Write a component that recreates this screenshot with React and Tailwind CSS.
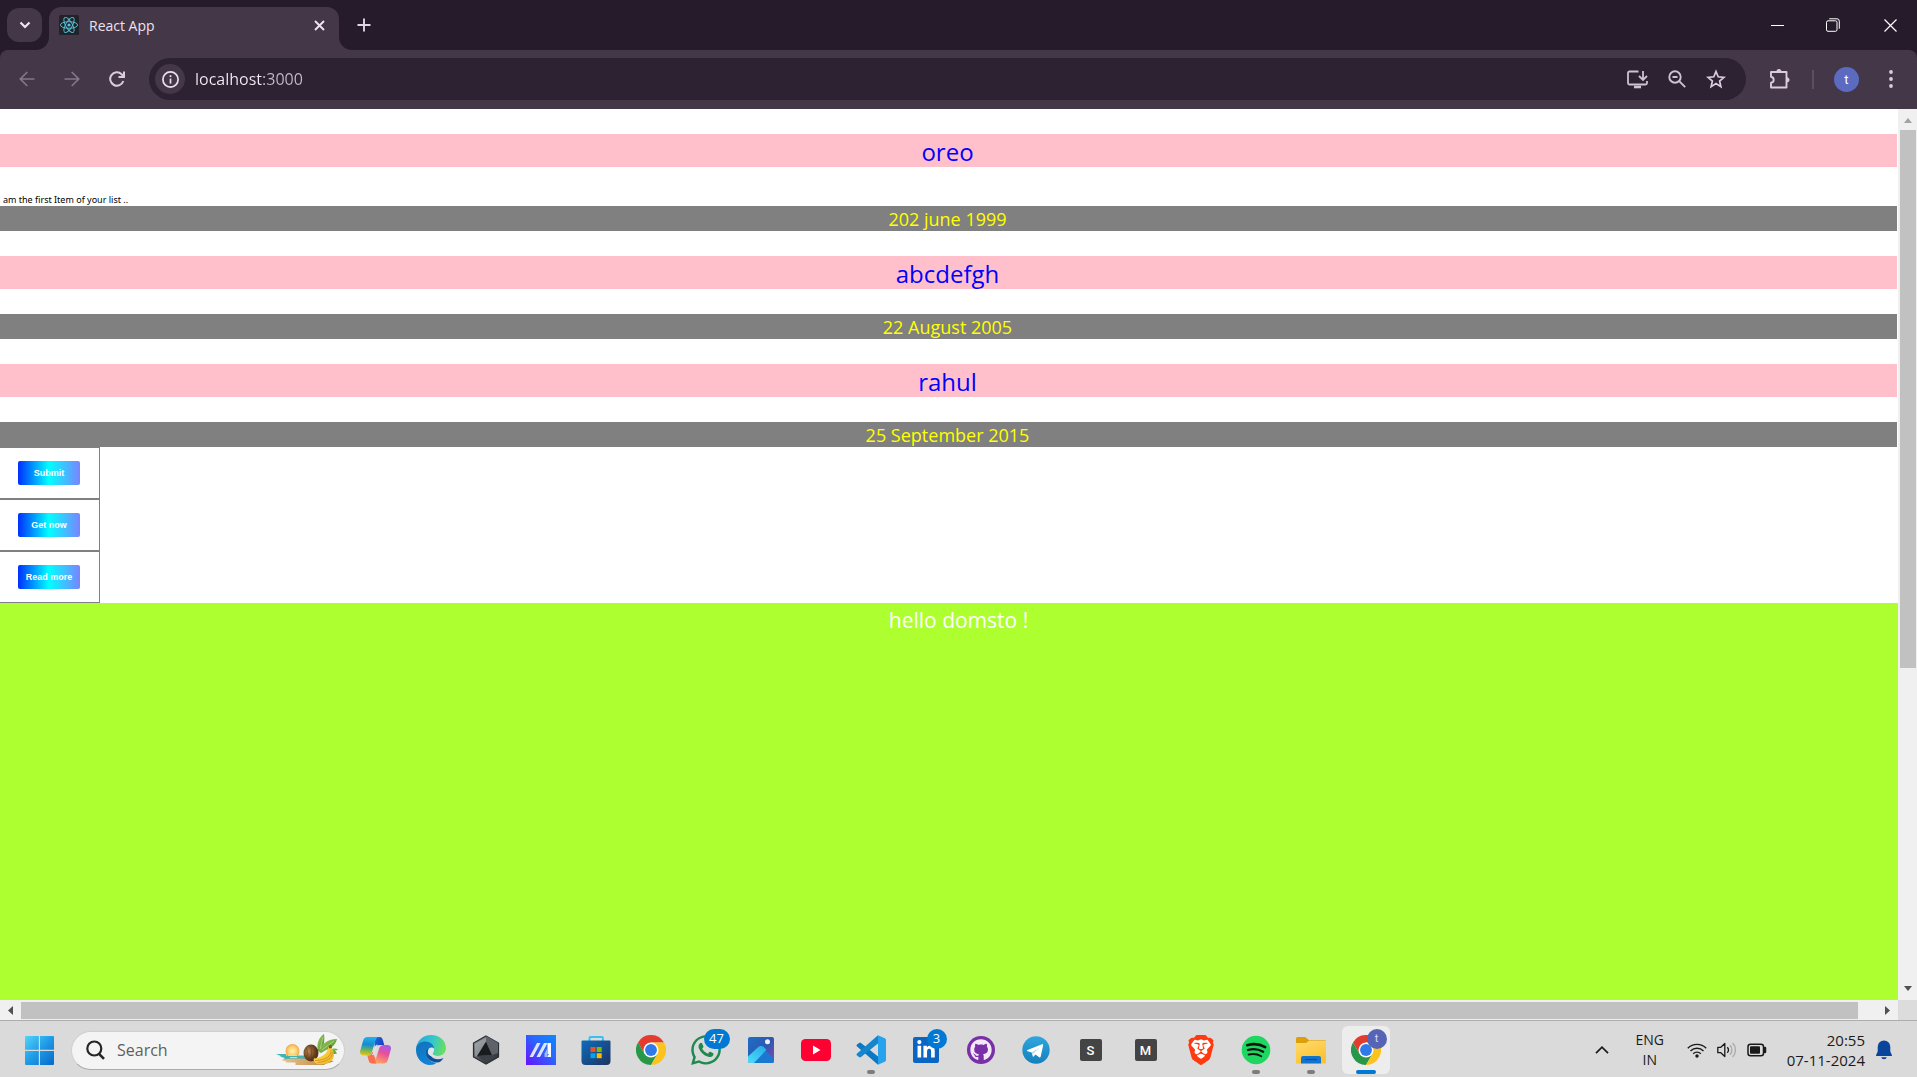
import React from "react";
import { FaWhatsapp, FaGithub, FaLinkedinIn } from "react-icons/fa";
import { SiBrave } from "react-icons/si";

const ENTRIES = [
  { name: "oreo", date: "202 june 1999", note: "am the first Item of your list .." },
  { name: "abcdefgh", date: "22 August 2005" },
  { name: "rahul", date: "25 September 2015" },
];

const ACTIONS = ["Submit", "Get now", "Read more"];

/* ---------- browser chrome ---------- */

function ReactLogo() {
  return (
    <svg width="20" height="20" viewBox="0 0 20 20" aria-hidden="true">
      <rect width="20" height="20" rx="1.5" fill="#20232a" />
      <g fill="none" stroke="#58c4dc" strokeWidth="0.9">
        <ellipse cx="10" cy="10" rx="8.6" ry="3.3" />
        <ellipse cx="10" cy="10" rx="8.6" ry="3.3" transform="rotate(60 10 10)" />
        <ellipse cx="10" cy="10" rx="8.6" ry="3.3" transform="rotate(120 10 10)" />
      </g>
      <circle cx="10" cy="10" r="1.6" fill="#58c4dc" />
    </svg>
  );
}

function TabCurve({ flip }) {
  return (
    <svg width="13" height="13" viewBox="0 0 13 13" className={flip ? "-scale-x-100" : ""} aria-hidden="true">
      <path d="M13 0v13H0C7.200 13 13 7.200 13 0z" fill="#443748" />
    </svg>
  );
}

function TitleBar() {
  return (
    <div className="flex h-[50px] items-end justify-between bg-[#261b2b]">
      <div className="flex h-full items-end">
        <button aria-label="Search tabs" className="mb-2 ml-[7px] flex h-[34px] w-[35px] items-center justify-center rounded-xl bg-[#443748]">
          <svg width="12" height="8" viewBox="0 0 12 8" fill="none" stroke="#efe4f2" strokeWidth="2.2" aria-hidden="true">
            <path d="M1.500 1.500L6 6l4.500-4.500" />
          </svg>
        </button>
        <div className="-ml-[6px]"><TabCurve /></div>
        <div className="flex h-[43px] w-[290px] items-center rounded-t-xl bg-[#443748] pb-[7px] pl-[10px] pr-[10px]">
          <ReactLogo />
          <span className="ml-[10px] flex-1 pt-0.5 text-sm text-[#ece2ee]">React App</span>
          <button aria-label="Close tab" className="flex h-5 w-5 items-center justify-center">
            <svg width="11" height="11" viewBox="0 0 11 11" stroke="#efe4f2" strokeWidth="1.900" aria-hidden="true">
              <path d="M1 1l9 9M10 1l-9 9" />
            </svg>
          </button>
        </div>
        <TabCurve flip />
        <button aria-label="New tab" className="mb-[15px] flex h-5 w-6 items-center justify-center">
          <svg width="14" height="14" viewBox="0 0 14 14" stroke="#e2d3e8" strokeWidth="1.900" aria-hidden="true">
            <path d="M7 0.500v13M0.500 7h13" />
          </svg>
        </button>
      </div>
      <div className="flex h-full">
        <button aria-label="Minimize" className="flex w-14 items-center justify-center">
          <svg width="13" height="13" viewBox="0 0 13 13" aria-hidden="true"><path d="M0 6.500h13" stroke="#fff" /></svg>
        </button>
        <button aria-label="Restore" className="flex w-14 items-center justify-center">
          <svg width="14" height="14" viewBox="0 0 14 14" fill="none" stroke="#fff" aria-hidden="true">
            <rect x="0.500" y="2.800" width="10.500" height="10.500" rx="1.500" />
            <path d="M3.200 0.800h7.800a2.300 2.300 0 0 1 2.300 2.300v7.600" />
          </svg>
        </button>
        <button aria-label="Close window" className="flex w-14 items-center justify-center pl-[2px]">
          <svg width="13" height="13" viewBox="0 0 13 13" stroke="#fff" strokeWidth="1.200" aria-hidden="true">
            <path d="M0.500 0.500l12 12M12.500 0.500l-12 12" />
          </svg>
        </button>
      </div>
    </div>
  );
}

function Toolbar() {
  const stroke = "#dccbe1";
  return (
    <div className="bg-[#261b2b]">
      <div className="flex h-[59px] items-center rounded-t-lg bg-[#443748] pb-px pr-4">
        <button aria-label="Back" className="ml-[14px] flex h-8 w-[25px] items-center justify-center">
          <svg width="16" height="16" viewBox="0 0 16 16" fill="none" stroke="#85768a" strokeWidth="1.700" aria-hidden="true">
            <path d="M15.500 8H1.500M8.300 1L1.300 8l7 7" />
          </svg>
        </button>
        <button aria-label="Forward" className="ml-5 flex h-8 w-[25px] items-center justify-center">
          <svg width="16" height="16" viewBox="0 0 16 16" fill="none" stroke="#85768a" strokeWidth="1.700" aria-hidden="true">
            <path d="M0.500 8h14M7.700 1l7 7-7 7" />
          </svg>
        </button>
        <button aria-label="Reload" className="ml-5 flex h-8 w-[25px] items-center justify-center">
          <svg width="16" height="16" viewBox="0 0 16 16" fill="none" stroke={stroke} strokeWidth="2" aria-hidden="true">
            <path d="M14.300 10A6.700 6.700 0 1 1 12.600 3.200L14 4.700" />
            <path d="M15 0.500v5.400H9.500" />
          </svg>
        </button>
        <div className="ml-5 flex h-[42px] flex-1 items-center rounded-full bg-[#2c2232] pl-[6px] pr-5">
          <button aria-label="View site information" className="flex h-[30px] w-[30px] items-center justify-center rounded-full bg-[#443748]">
            <svg width="17" height="17" viewBox="0 0 17 17" fill="none" stroke="#eadff0" strokeWidth="1.700" aria-hidden="true">
              <circle cx="8.500" cy="8.500" r="7.600" />
              <path d="M8.500 7.600v5" />
              <path d="M8.500 4.200v1.900" />
            </svg>
          </button>
          <input
            type="text"
            aria-label="Address"
            defaultValue="localhost:3000"
            className="ml-[10px] min-w-0 flex-1 bg-[linear-gradient(to_right,#f3ecf5_68px,#c5b9ca_68px)] bg-clip-text text-base text-transparent outline-none"
          />
          <div className="flex items-center gap-5">
            <button aria-label="Install app">
              <svg width="21" height="19" viewBox="0 0 21 19" fill="none" stroke="#cfc0d4" strokeWidth="1.800" aria-hidden="true">
                <path d="M11.500 1.500H2.500a1.500 1.500 0 0 0-1.500 1.500v10a1.500 1.500 0 0 0 1.500 1.500h16a1.500 1.500 0 0 0 1.500-1.500v-2" />
                <path d="M16 1v8.500M12 6l4 4 4-4" />
                <path d="M7 17h7" strokeWidth="2.600" />
              </svg>
            </button>
            <button aria-label="Zoom">
              <svg width="18" height="18" viewBox="0 0 18 18" fill="none" stroke="#cfc0d4" strokeWidth="1.900" aria-hidden="true">
                <circle cx="7" cy="7" r="5.700" />
                <path d="M11.200 11.200l6 6M4.500 7h5" />
              </svg>
            </button>
            <button aria-label="Bookmark this tab">
              <svg width="20" height="20" viewBox="0 0 20 20" fill="none" stroke="#dccbe1" strokeWidth="1.700" aria-hidden="true">
                <path d="M10 2.500l2.200 5.300 5.700.5-4.300 3.700 1.300 5.600-4.900-3-4.900 3 1.300-5.600-4.300-3.700 5.700-.5z" />
              </svg>
            </button>
          </div>
        </div>
        <button aria-label="Extensions" className="ml-[23px]">
          <svg width="22" height="22" viewBox="0 0 22 22" fill="none" stroke={stroke} strokeWidth="1.900" strokeLinejoin="round" aria-hidden="true">
            <path d="M2 4h15.500v15.500H2v-4.700c3.600-.6 3.600-5.400 0-6z" />
            <path d="M7.800 3.500a2.100 2.100 0 0 1 4.200 0zM18 9.800a2.100 2.100 0 0 1 0 4.200z" fill={stroke} strokeWidth="1" />
          </svg>
        </button>
        <div className="ml-[21px] h-[19px] w-[2px] bg-[#5c4f61]" />
        <button aria-label="Profile t" className="ml-5 h-[25px] w-[25px] rounded-full bg-[#5c6bc0] font-['Roboto',sans-serif] text-[13px] leading-[25px] text-white">
          t
        </button>
        <button aria-label="Menu" className="ml-[22px] flex w-5 justify-center">
          <svg width="4" height="18" viewBox="0 0 4 18" fill="#dccbe1" aria-hidden="true">
            <circle cx="2" cy="2" r="1.900" /><circle cx="2" cy="9" r="1.900" /><circle cx="2" cy="16" r="1.900" />
          </svg>
        </button>
      </div>
    </div>
  );
}

/* ---------- page ---------- */

function Entry({ name, date, note }) {
  return (
    <section>
      <h2 className="my-[25px] bg-[#ffc0cb] pr-0.5 pt-0.5 text-center text-2xl/[31px] font-normal text-[#0000ff]">{name}</h2>
      {note && <p className="pl-[3px] pt-0.5 font-['Noto_Sans',sans-serif] text-[9px]/[12px] text-black">{note}</p>}
      <p className="bg-[#808080] pr-0.5 pt-0.5 text-center text-lg/[23px] text-[#ffff00]">{date}</p>
    </section>
  );
}

function PageContent() {
  return (
    <main className="flex min-w-0 flex-1 flex-col overflow-hidden bg-white">
      <div className="mr-px flow-root">
        {ENTRIES.map((e) => <Entry key={e.name} {...e} />)}
      </div>
      {ACTIONS.map((label) => (
        <div key={label} className="w-[100px] border border-l-0 border-[#808080] py-[13px] pl-[18px]">
          <button className="block h-6 w-[62px] rounded-[2px] bg-[linear-gradient(to_right,#0030ff,#00ffff_50%,#7b83ff)] pt-0.5 font-['Liberation_Sans',Arial,sans-serif] text-[9px] font-bold text-white">
            {label}
          </button>
        </div>
      ))}
      <div className="w-screen flex-1 bg-[#adff2f] pt-0.5 text-center text-[21px]/[30px] text-white">hello domsto !</div>
    </main>
  );
}

function VerticalScrollbar() {
  return (
    <div className="flex w-[19px] flex-col items-center bg-[#f0f0f0] pl-px">
      <div className="flex h-[21px] items-center pt-0.5">
        <svg width="8" height="5" viewBox="0 0 8 5" fill="#a3a3a3" aria-hidden="true"><path d="M4 0l4 5H0z" /></svg>
      </div>
      <div className="w-4 grow-[538] bg-[#c1c1c1]" />
      <div className="grow-[308]" />
      <div className="flex h-6 items-center">
        <svg width="8" height="5" viewBox="0 0 8 5" fill="#505050" aria-hidden="true"><path d="M0 0h8L4 5z" /></svg>
      </div>
    </div>
  );
}

function HorizontalScrollbar() {
  return (
    <div className="flex h-5 bg-[#dcdcdc]">
      <div className="flex flex-1 items-center bg-[#f0f0f0] pt-px">
        <div className="flex w-[21px] justify-center pr-px">
          <svg width="5" height="9" viewBox="0 0 5 9" fill="#505050" aria-hidden="true"><path d="M5 0v9L0 4.500z" /></svg>
        </div>
        <div className="h-[17px] grow-[1837] bg-[#c1c1c1]" />
        <div className="grow-[19]" />
        <div className="flex w-[21px] justify-center">
          <svg width="5" height="9" viewBox="0 0 5 9" fill="#505050" aria-hidden="true"><path d="M0 0v9l5-4.500z" /></svg>
        </div>
      </div>
      <div className="w-[19px]" />
    </div>
  );
}

/* ---------- taskbar icons ---------- */

function WindowsLogo() {
  return (
    <svg width="29" height="29" viewBox="0 0 29 29" aria-hidden="true">
      <defs>
        <linearGradient id="win" x1="0" y1="0" x2="29" y2="29" gradientUnits="userSpaceOnUse">
          <stop offset="0" stopColor="#52d4fb" /><stop offset="0.500" stopColor="#1f9ae6" /><stop offset="1" stopColor="#0669c9" />
        </linearGradient>
      </defs>
      <path fill="url(#win)" d="M1 0h12.800v13.800H0V1a1 1 0 0 1 1-1zM15 0h13a1 1 0 0 1 1 1v12.800H15zM0 15h13.800v14H1a1 1 0 0 1-1-1zM15 15h14v13a1 1 0 0 1-1 1H15z" />
    </svg>
  );
}

function FruitArt() {
  return (
    <svg width="63" height="32" viewBox="0 0 63 32" aria-hidden="true">
      <defs>
        <radialGradient id="sun"><stop offset="0" stopColor="#fff3b0" /><stop offset="0.600" stopColor="#fbd274" /><stop offset="1" stopColor="#f2a648" /></radialGradient>
        <radialGradient id="coco" cx="0.350" cy="0.400"><stop offset="0" stopColor="#b98850" /><stop offset="1" stopColor="#5a3417" /></radialGradient>
        <linearGradient id="sand"><stop offset="0" stopColor="#e8c490" /><stop offset="1" stopColor="#b9803f" /></linearGradient>
        <linearGradient id="leaf" x1="0" x2="1" y2="1"><stop offset="0" stopColor="#a8d05c" /><stop offset="1" stopColor="#3f8a34" /></linearGradient>
        <linearGradient id="ban" x1="0" x2="1" y2="1"><stop offset="0" stopColor="#ffe65c" /><stop offset="1" stopColor="#eeb01c" /></linearGradient>
      </defs>
      <circle cx="16.500" cy="17" r="7" fill="url(#sun)" />
      <path d="M0 20h10v1.500h20V27H14l-7-1.500 2-1.500-6-1.500h3z" fill="#42b3b0" />
      <path d="M12 21.500h9M14 23.500h7" stroke="#f6dda0" strokeWidth="0.900" />
      <path d="M5 26c9-2 30-2 53 1-4 2-8 2-10 4H20c-2-1 1-2-1-2.500H10c1-1-1-1.500-5-2.500z" fill="url(#sand)" />
      <path d="M42 17C40 10 43 3 48 0c1 6 0 12-3 17z" fill="url(#leaf)" />
      <path d="M43 18c1-7 8-13 18-13-1 5-5 9-11 11l-5 3z" fill="url(#leaf)" />
      <path d="M52 17c3-3 8-3 10-1l-3 .5 2 3-6 1z" fill="url(#leaf)" />
      <path d="M44 15L47 3M46 16L58 7" stroke="#d8e89c" strokeWidth="0.600" />
      <ellipse cx="35" cy="19" rx="7.500" ry="8.500" fill="url(#coco)" />
      <path d="M30 14c2 3 2 8 0 11M34 11c2 5 2 11 0 16M38 12c1.500 5 1.500 10 0 14" fill="none" stroke="#6e4421" strokeWidth="0.700" />
      <path d="M52.500 12.500l3-.5.7 3.500c4 6 1 13-8 14.500-6 1-11-.5-10.500-5.500 7-.5 14-4 14.800-12z" fill="url(#ban)" />
      <path d="M55 16c.5 6-5 10.500-16 10.500M56.500 18c0 6-6 10-15 10.500" fill="none" stroke="#c48716" strokeWidth="0.700" />
      <path d="M52.500 11.500l3-.5.5 3-3 .5z" fill="#7b5a1c" />
    </svg>
  );
}

function Copilot() {
  return (
    <svg width="31" height="28" viewBox="0 0 31 28" aria-hidden="true">
      <defs>
        <linearGradient id="cpA" x1="0.300" y1="0" x2="0.200" y2="1"><stop offset="0" stopColor="#1fb0ee" /><stop offset="0.400" stopColor="#168ccf" /><stop offset="0.700" stopColor="#6cb45a" /><stop offset="1" stopColor="#f5c60c" /></linearGradient>
        <linearGradient id="cpB" x1="0.800" y1="0" x2="0.400" y2="1"><stop offset="0" stopColor="#a35af0" /><stop offset="0.450" stopColor="#e8509a" /><stop offset="1" stopColor="#ffa45c" /></linearGradient>
        <linearGradient id="cpC" x1="0" x2="1" y2="0.600"><stop offset="0" stopColor="#1c6fe0" /><stop offset="1" stopColor="#1a3bc4" /></linearGradient>
      </defs>
      <path d="M14 1h5.500c2 0 2.800 1 3.500 3.500L24.200 9H20c-3 0-4 1-5 4z" fill="url(#cpC)" />
      <path d="M7.500 1H19c-2.500 0-3 2-4 5l-3 9.500c-1 3-2 4-5 4H4c-3.500 0-4.600-2-3.700-5L3 5c1-3 2-4 4.500-4z" fill="url(#cpA)" />
      <path d="M23.500 27.500H12c2.500 0 3-2 4-5l3-9.500c1-3 2-4 5-4h3c3.500 0 4.600 2 3.700 5L28 23.500c-1 3-2 4-4.500 4z" fill="url(#cpB)" />
      <path d="M16.500 27.500H12c-2 0-2.800-1-3.500-3.500L7.300 19.500c3.500 0 4.200-1.500 5-4l3 7c.5 2 0 4 1.200 5z" fill="#f9704f" />
      <path d="M13.500 15.500l1.500-5c.6-1.500 1.500-2 3-1.800-1 .8-1.300 1.800-1.700 3l-1.600 5.300c-.6 1.700-1.500 2.200-3 2 1-.8 1.400-2.200 1.800-3.500z" fill="#e4e0e2" />
    </svg>
  );
}

function Edge() {
  return (
    <svg width="30" height="30" viewBox="0 0 30 30" aria-hidden="true">
      <defs>
        <linearGradient id="edA" x1="0" y1="0.400" x2="1" y2="0.600"><stop offset="0" stopColor="#28a7df" /><stop offset="0.500" stopColor="#35c5cf" /><stop offset="1" stopColor="#6be256" /></linearGradient>
        <linearGradient id="edB" x1="0" y1="0" x2="0.500" y2="1"><stop offset="0" stopColor="#1272b8" /><stop offset="1" stopColor="#1083d9" /></linearGradient>
      </defs>
      <path d="M0 14C.5 6 7 0 15 0c9 0 15 6 15 13 0 5-4 8-8.500 8-3 0-5-1-5-2.200 0-.8 1.500-1.600 1.500-4C18 11 13.500 8 9 8c-4.500 0-8 3-9 6z" fill="url(#edA)" />
      <path d="M0 15c0-5 4-8.500 9-8.500 5 0 9 3 9 7-6-2-8 3-7 7 1 4.500 6 8 10 7-2 1.700-4 2.500-7 2.500C6 30 0 23 0 15z" fill="url(#edB)" />
      <path d="M10.500 15c-2 7 4 12.500 10.500 12.500 3 0 5-2 6.500-4.500-5 2.500-11 1.500-13-3-1-2.500 0-4.500 1-5.500-2-1-4-.7-5 .5z" fill="#0d4f97" />
      <path d="M12 18.500c-.6-3.500.8-6 4-6 1.500 0 2 1 2 2.300 0 2.400-1.500 3.200-1.500 4 0 1.300 2 2.200 4.500 2.200-4 1.200-7.800.5-9-2.500z" fill="#dbe4ea" />
    </svg>
  );
}

function HexApp() {
  return (
    <svg width="30" height="30" viewBox="0 0 30 30" aria-hidden="true">
      <defs>
        <linearGradient id="hxA" x1="0" x2="1" y2="1"><stop offset="0" stopColor="#9ba1a5" /><stop offset="0.500" stopColor="#52585d" /><stop offset="1" stopColor="#24282c" /></linearGradient>
      </defs>
      <path d="M15 1l12.500 7v14L15 29 2.500 22V8z" fill="url(#hxA)" stroke="#2a2e32" strokeWidth="1.200" />
      <path d="M15 6.500L21 20l-15 1z" fill="#191c1f" />
      <path d="M15 6.500L21 20l6-2V8L15 1z" fill="#5d6368" />
      <path d="M4 9l11-6.500V6.500L6 21l-2 .5z" fill="#b5babd" opacity="0.500" />
      <path d="M6 21l15-1 5 1.500L15 28z" fill="#3b4146" />
    </svg>
  );
}

function ArmouryApp() {
  return (
    <svg width="30" height="30" viewBox="0 0 30 30" aria-hidden="true">
      <defs>
        <linearGradient id="arA" x1="1" y1="0" x2="0" y2="1"><stop offset="0" stopColor="#0a8cff" /><stop offset="0.450" stopColor="#2d63ff" /><stop offset="1" stopColor="#6a10ff" /></linearGradient>
      </defs>
      <rect width="30" height="30" fill="url(#arA)" />
      <path d="M3.500 22L11 8h3.500L7 22zM10.500 22L18 8h3.500L14 22z" fill="#dfe6ff" />
      <path d="M21.500 8H25v14h-4l2-3h-1.500z" fill="#fff" />
      <path d="M18.500 18.500L21.500 13v9h-3z" fill="#9db8ff" />
    </svg>
  );
}

function StoreApp() {
  return (
    <svg width="30" height="30" viewBox="0 0 30 30" aria-hidden="true">
      <defs>
        <linearGradient id="stA" x1="0" x2="1" y2="1"><stop offset="0" stopColor="#0f6cbd" /><stop offset="1" stopColor="#1e3360" /></linearGradient>
      </defs>
      <path d="M8.500 7V3.200a1.200 1.200 0 0 1 1.200-1.200h11a1.200 1.200 0 0 1 1.200 1.200V7" fill="none" stroke="#35c1f1" strokeWidth="2" />
      <path d="M.5 6.500a1 1 0 0 1 1-1h27a1 1 0 0 1 1 1V26a4 4 0 0 1-4 4h-21a4 4 0 0 1-4-4z" fill="url(#stA)" />
      <path d="M9.500 12h5v5h-5z" fill="#f25022" /><path d="M15.700 12h5v5h-5z" fill="#7fba00" />
      <path d="M9.500 18.200h5v5h-5z" fill="#00a4ef" /><path d="M15.700 18.200h5v5h-5z" fill="#ffb900" />
    </svg>
  );
}

function Chrome() {
  return (
    <svg width="30" height="30" viewBox="0 0 48 48" aria-hidden="true">
      <path d="M24 12h20.800A24 24 0 0 0 3.200 12l10.400 18z" fill="#e33b2e" />
      <path d="M13.600 30L3.200 12A24 24 0 0 0 24 48l10.400-18z" fill="#279847" />
      <path d="M34.400 30L24 48A24 24 0 0 0 44.800 12H24z" fill="#fcc31e" />
      <circle cx="24" cy="24" r="12" fill="#fff" />
      <circle cx="24" cy="24" r="9.500" fill="#2f79ea" />
    </svg>
  );
}

function WhatsApp() {
  return <FaWhatsapp size={34} color="#1f8a50" aria-hidden="true" />;
}

function Photos() {
  return (
    <svg width="26" height="26" viewBox="0 0 26 26" aria-hidden="true">
      <defs>
        <linearGradient id="phA" x1="0" x2="1" y2="0.800"><stop offset="0" stopColor="#1a6fc8" /><stop offset="0.600" stopColor="#3057b0" /><stop offset="1" stopColor="#7a4bb0" /></linearGradient>
        <linearGradient id="phB" x1="0.800" y1="0" x2="0" y2="1"><stop offset="0" stopColor="#28aee8" /><stop offset="1" stopColor="#4fe0fa" /></linearGradient>
        <clipPath id="phC"><rect width="26" height="26" rx="2" /></clipPath>
      </defs>
      <g clipPath="url(#phC)">
        <rect width="26" height="26" fill="url(#phA)" />
        <path d="M13 9l15 15v4H4z" fill="#1a78d0" />
        <path d="M-1 20.500L10 10.200a4.200 4.200 0 0 1 6 0l2.500 2.600L5 27h-6z" fill="url(#phB)" />
        <circle cx="19.500" cy="4.700" r="2.500" fill="#eaf3ff" />
      </g>
    </svg>
  );
}

function YouTube() {
  return (
    <svg width="30" height="22" viewBox="0 0 30 22" aria-hidden="true">
      <rect width="30" height="22" rx="4.500" fill="#ff0033" />
      <path d="M12 6.500l7.500 4.500-7.500 4.500z" fill="#fff" />
    </svg>
  );
}

function VSCode() {
  return (
    <svg width="30" height="30" viewBox="0 0 30 30" aria-hidden="true">
      <path d="M1 9.500L3 8a1.500 1.500 0 0 1 2 0L22 21.500v8.300L.8 11.200A1.200 1.200 0 0 1 1 9.500z" fill="#0a78c2" />
      <path d="M1 20.500L3 22a1.500 1.500 0 0 0 2 0L22 8.500V.2L.8 18.800a1.200 1.200 0 0 0 .2 1.700z" fill="#1585ce" />
      <path d="M22 .2l6.800 3A2 2 0 0 1 30 5v20a2 2 0 0 1-1.200 1.800l-6.800 3z" fill="#27a3ee" />
    </svg>
  );
}

function LinkedIn() {
  return (
    <span className="flex h-[26px] w-[26px] items-center justify-center rounded-[2px] bg-[#0a66c2]">
      <FaLinkedinIn size={20} color="#fff" aria-hidden="true" />
    </span>
  );
}

function GitHub() {
  return (
    <span className="flex h-7 w-7 items-center justify-center rounded-full bg-[#7a2ea8]">
      <FaGithub size={22} color="#f3e8f8" aria-hidden="true" />
    </span>
  );
}

function Telegram() {
  return (
    <svg width="28" height="28" viewBox="0 0 28 28" aria-hidden="true">
      <defs><linearGradient id="tg" x1="0" x2="0" y2="1"><stop offset="0" stopColor="#2fa6df" /><stop offset="1" stopColor="#1480bd" /></linearGradient></defs>
      <circle cx="14" cy="14" r="13.700" fill="url(#tg)" />
      <path d="M5.500 14L20 8.300c.8-.3 1.300.1 1.100 1.100l-2.400 11.200c-.2.900-.8 1.100-1.500.7l-3.700-2.700-1.900 1.800c-.5.400-.8.300-.9-.3l-1-3.700-4.100-1.200c-.9-.3-.9-.9-.1-1.200z" fill="#fff" />
      <path d="M9.900 16.300l7.700-4.900-6 5.800-.6 2.600z" fill="#b9d9ec" />
    </svg>
  );
}

function LetterApp({ letter }) {
  return (
    <span className="flex h-[22px] w-[22px] items-center justify-center rounded-[2px] bg-[#444444] font-['Roboto',sans-serif] text-[13px] font-medium leading-none text-white">
      {letter}
    </span>
  );
}

function Brave() {
  return (
    <svg width="30" height="30" viewBox="0 0 30 30" aria-hidden="true">
      <path d="M9 4h12l4 6-3 13-7 5-7-5L5 10z" fill="#fff" />
      <SiBrave x="0" y="0" size={30} color="#ff3a10" />
    </svg>
  );
}

function Spotify() {
  return (
    <svg width="30" height="30" viewBox="0 0 30 30" fill="none" stroke="#0c130e" strokeLinecap="round" aria-hidden="true">
      <circle cx="15" cy="15" r="14.300" fill="#1ed760" stroke="none" />
      <path d="M6.200 10.200c6-1.700 12.800-1.100 18 1.900" strokeWidth="2.600" />
      <path d="M6.900 15c5-1.400 10.700-.8 15.300 1.800" strokeWidth="2.200" />
      <path d="M7.500 19.600c4.400-1.100 8.900-.6 12.800 1.600" strokeWidth="1.800" />
    </svg>
  );
}

function Explorer() {
  return (
    <svg width="30" height="27" viewBox="0 0 30 27" aria-hidden="true">
      <defs><linearGradient id="fx" x1="0" x2="0.500" y2="1"><stop offset="0" stopColor="#ffdb6e" /><stop offset="1" stopColor="#fcc22f" /></linearGradient></defs>
      <path d="M0 1.500A1.500 1.500 0 0 1 1.500 0h7.800L13 3.200h16a1 1 0 0 1 1 1V8H0z" fill="#dd9f0b" />
      <path d="M0 6h10l3-2.200h17V26.500H0z" fill="url(#fx)" />
      <path d="M5 26.500v-5.500a2 2 0 0 1 2-2h16a2 2 0 0 1 2 2v5.500z" fill="#1374cf" />
      <path d="M9 22.500h12" stroke="#0b4f97" strokeWidth="1.200" />
    </svg>
  );
}

const PINNED = [
  { name: "Copilot", Icon: Copilot },
  { name: "Microsoft Edge", Icon: Edge },
  { name: "Armoury Crate", Icon: HexApp },
  { name: "MyASUS", Icon: ArmouryApp },
  { name: "Microsoft Store", Icon: StoreApp },
  { name: "Google Chrome", Icon: Chrome },
  { name: "WhatsApp", Icon: WhatsApp, badge: "47" },
  { name: "Photos", Icon: Photos },
  { name: "YouTube", Icon: YouTube },
  { name: "Visual Studio Code", Icon: VSCode, running: true },
  { name: "LinkedIn", Icon: LinkedIn, badge: "3" },
  { name: "GitHub", Icon: GitHub },
  { name: "Telegram", Icon: Telegram },
  { name: "S app", Icon: () => <LetterApp letter="S" /> },
  { name: "M app", Icon: () => <LetterApp letter="M" /> },
  { name: "Brave", Icon: Brave },
  { name: "Spotify", Icon: Spotify, running: true },
  { name: "File Explorer", Icon: Explorer, running: true },
  { name: "Chrome window", Icon: Chrome, active: true },
];

function TaskButton({ name, Icon, badge, running, active }) {
  return (
    <button aria-label={name} className="flex w-[55px] justify-center">
      <span className={active ? "relative flex h-12 w-12 items-center justify-center rounded-md bg-[#ededed]" : "relative flex h-12 w-12 items-center justify-center"}>
        <Icon />
        {badge && (
          <span className={badge.length > 1 ? "absolute right-0 top-[3px] flex h-5 w-[26px] items-center justify-center rounded-full bg-[#0078d4] text-[13px] text-white" : "absolute right-[3px] top-[3px] flex h-5 w-5 items-center justify-center rounded-full bg-[#0078d4] text-[13px] text-white"}>
            {badge}
          </span>
        )}
        {active && (
          <span className="absolute right-[3px] top-[3px] flex h-5 w-5 items-center justify-center rounded-full bg-[#5664b5] font-['Roboto',sans-serif] text-[11px] text-[#d8dcf5]">t</span>
        )}
        {running && <span className="absolute bottom-0 left-5 h-1 w-2 rounded-full bg-[#7d7d7d]" />}
        {active && <span className="absolute bottom-0 left-[14px] h-1 w-5 rounded-full bg-[#0078d4]" />}
      </span>
    </button>
  );
}

function Taskbar() {
  return (
    <footer className="flex h-[57px] items-center border-t border-[#adadad] bg-[#dadada] pl-[25px] pr-[25px] pt-0.5 text-[#1a1a1a]">
      <button aria-label="Start"><WindowsLogo /></button>
      <label className="ml-[17px] flex h-[39px] w-[274px] items-center rounded-full border border-[#cfcfcf] border-b-[#ababab] bg-[#f4f4f4] pl-[14px] pr-[5px]">
        <svg width="19" height="20" viewBox="0 0 19 20" fill="none" stroke="#262626" strokeWidth="2.200" aria-hidden="true">
          <circle cx="8.300" cy="8.500" r="7" /><path d="M13 13.800l5 5" strokeWidth="2.600" />
        </svg>
        <input
          type="text"
          aria-label="Search"
          placeholder="Search"
          className="ml-3 w-0 flex-1 bg-transparent text-base outline-none placeholder:text-[#5f5f5f]"
        />
        <FruitArt />
      </label>
      <nav className="ml-[3px] flex items-center">
        {PINNED.map((p) => <TaskButton key={p.name} {...p} />)}
      </nav>
      <div className="ml-auto flex items-center">
        <button aria-label="Show hidden icons" className="flex w-10 justify-center">
          <svg width="14" height="8" viewBox="0 0 14 8" fill="none" stroke="#1a1a1a" strokeWidth="1.700" aria-hidden="true"><path d="M1 7.200l6-6 6 6" /></svg>
        </button>
        <button className="ml-1 w-12 text-center text-sm/5">
          <span className="block">ENG</span>
          <span className="block">IN</span>
        </button>
        <button aria-label="Network, volume and battery" className="ml-[13px] flex items-center gap-[10px]">
          <svg width="20" height="16" viewBox="0 0 20 16" fill="none" stroke="#1a1a1a" strokeWidth="1.400" aria-hidden="true">
            <path d="M.8 6.200a13 13 0 0 1 18.400 0M3.500 9a9.200 9.200 0 0 1 13 0M6.200 11.700a5.400 5.400 0 0 1 7.600 0" />
            <circle cx="10" cy="14" r="1.700" fill="#1a1a1a" stroke="none" />
          </svg>
          <svg width="20" height="16" viewBox="0 0 20 16" fill="none" stroke="#1a1a1a" strokeWidth="1.300" aria-hidden="true">
            <path d="M.8 5.300h3L7.800 1.500v13l-4-3.800h-3z" strokeLinejoin="round" />
            <path d="M10.300 5.300a4 4 0 0 1 0 5.400" />
            <path d="M13 3.200a7 7 0 0 1 0 9.600M15.600 1a10 10 0 0 1 0 14" stroke="#a9a9a9" />
          </svg>
          <svg width="20" height="14" viewBox="0 0 20 14" fill="none" stroke="#1a1a1a" strokeWidth="1.500" aria-hidden="true">
            <rect x="1" y="1.200" width="15.500" height="11.500" rx="2.500" />
            <rect x="3" y="3.200" width="10" height="7.500" rx="1" fill="#1a1a1a" stroke="none" />
            <path d="M18 5v4" strokeWidth="2.500" strokeLinecap="round" />
          </svg>
        </button>
        <button className="ml-5 text-right text-[15px]/5">
          <span className="block">20:55</span>
          <span className="block">07-11-2024</span>
        </button>
        <button aria-label="Notifications" className="ml-[11px]">
          <svg width="16" height="20" viewBox="0 0 16 20" fill="#0a459c" aria-hidden="true">
            <path d="M8 .5a6.300 6.300 0 0 1 6.300 6.300v4.700l1.600 3.500v1H.1v-1l1.600-3.500V6.800A6.300 6.300 0 0 1 8 .5zM5.200 17.200h5.600a2.900 2.900 0 0 1-5.600 0z" />
          </svg>
        </button>
      </div>
    </footer>
  );
}

export default function App() {
  return (
    <div className="flex h-screen flex-col overflow-hidden font-['Open_Sans','Noto_Sans',sans-serif]">
      <header>
        <TitleBar />
        <Toolbar />
      </header>
      <div className="flex min-h-0 flex-1">
        <PageContent />
        <VerticalScrollbar />
      </div>
      <HorizontalScrollbar />
      <Taskbar />
    </div>
  );
}
